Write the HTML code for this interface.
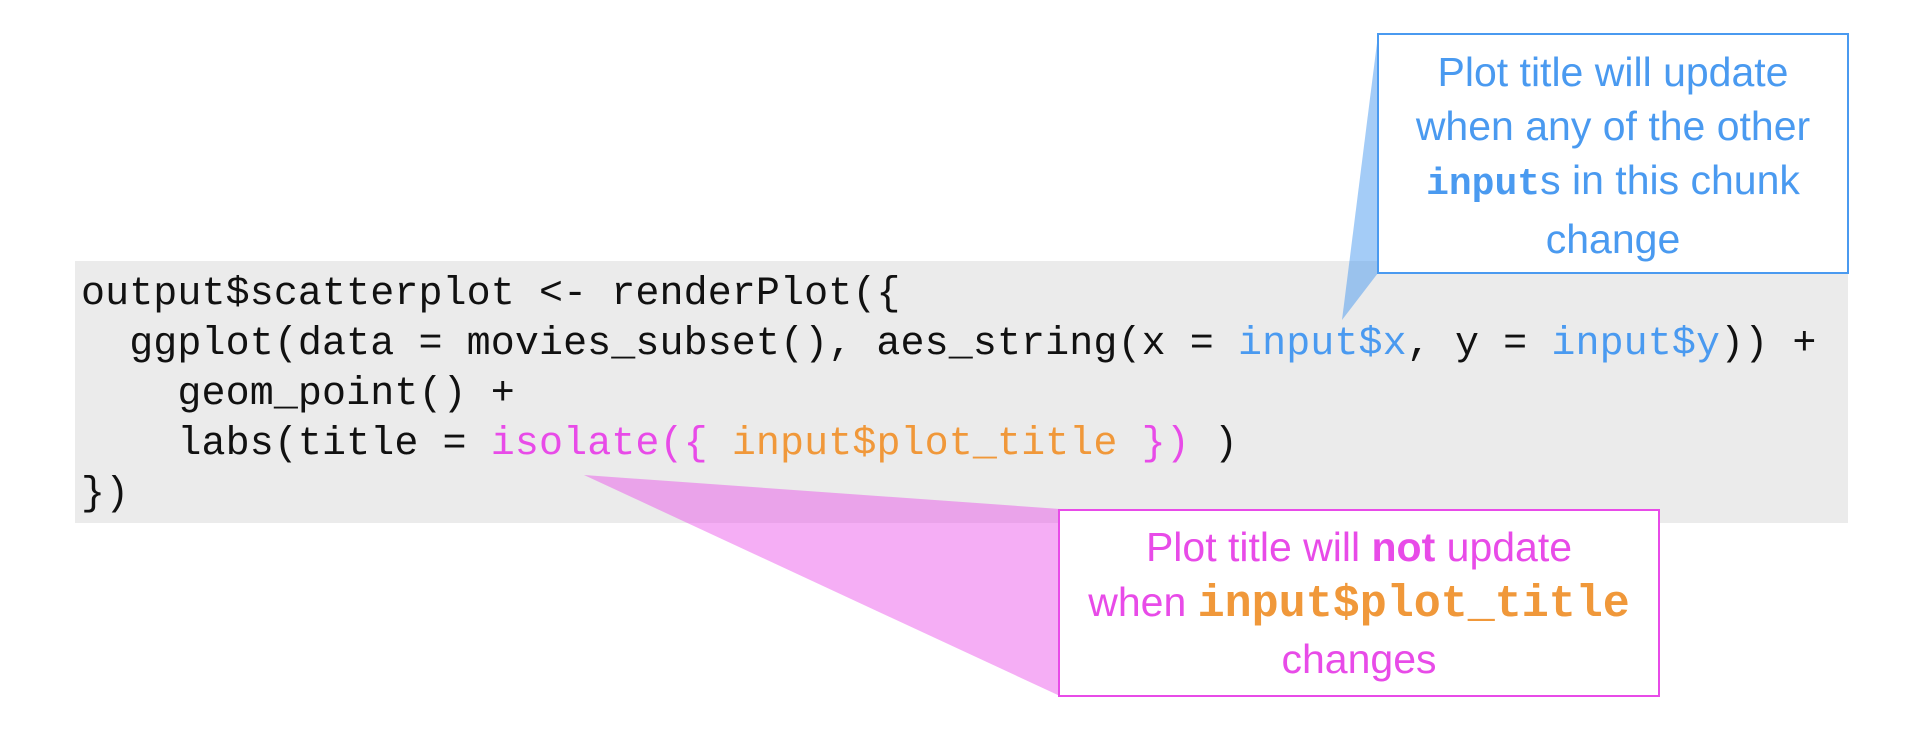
<!DOCTYPE html>
<html><head><meta charset="utf-8"><style>
html,body{margin:0;padding:0;background:#fff;width:1920px;height:730px;overflow:hidden;position:relative}
.gray{position:absolute;left:75px;top:261px;width:1773px;height:262px;background:#ebebeb}
.code{position:absolute;left:81px;top:270px;font-family:"Liberation Mono",monospace;font-size:40px;line-height:50px;color:#111;white-space:pre;letter-spacing:0.1px}
.b{color:#4a9af0}.p{color:#e84be8}.o{color:#f0983a}
svg{position:absolute;left:0;top:0}
.box{position:absolute;background:#fff;box-sizing:border-box;text-align:center;font-family:"Liberation Sans",sans-serif;font-size:41px;white-space:nowrap}
.blue{left:1377px;top:33px;width:472px;height:241px;border:2px solid #4a9af0;color:#4a9af0;line-height:54px;padding-top:10px}
.pink{left:1058px;top:509px;width:602px;height:188px;border:2px solid #e84be8;color:#e84be8;line-height:55px;padding-top:9px}
.m{font-family:"Liberation Mono",monospace;font-weight:bold;font-size:38px}
.pink .m{font-size:45px}
</style></head><body>
<div class="gray"></div>
<div class="code">output$scatterplot &lt;- renderPlot({
  ggplot(data = movies_subset(), aes_string(x = <span class="b">input$x</span>, y = <span class="b">input$y</span>)) +
    geom_point() +
    labs(title = <span class="p">isolate({</span> <span class="o">input$plot_title</span> <span class="p">})</span> )
})</div>
<svg width="1920" height="730">
<polygon points="1378,35 1342,320 1378,273" fill="#4a9af0" fill-opacity="0.5"/>
<polygon points="584,475 1060,509 1060,696" fill="#e84be8" fill-opacity="0.45"/>
</svg>
<div class="box blue">Plot title will update<br>when any of the other<br><span class="m">input</span>s in this chunk<br>change</div>
<div class="box pink">Plot title will <b>not</b> update<br>when <span class="m o">input$plot_title</span><br>changes</div>
</body></html>
